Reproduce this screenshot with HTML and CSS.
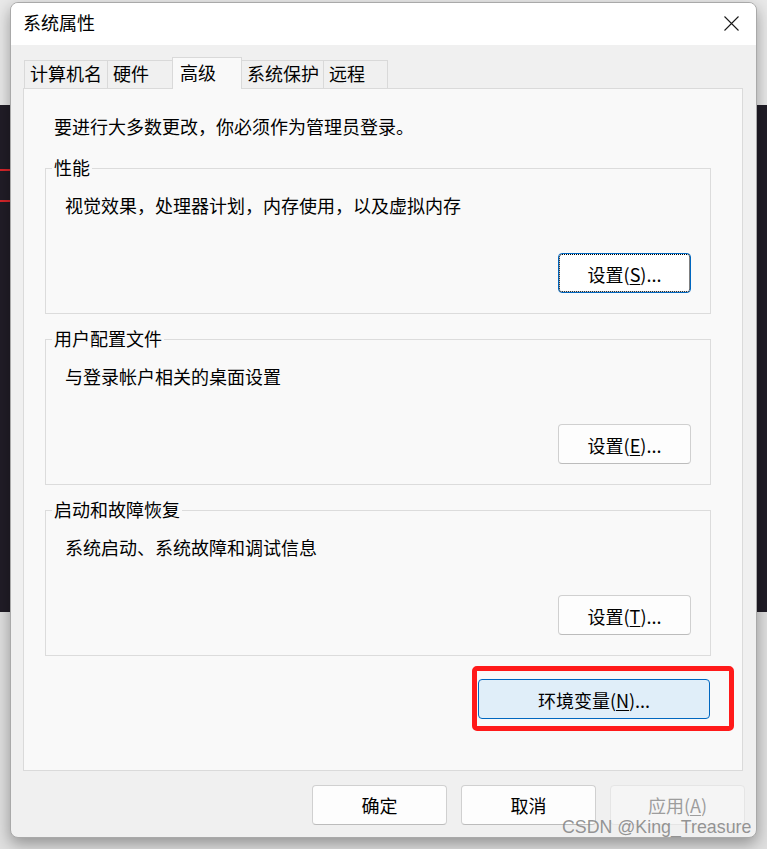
FILE: index.html
```html
<!DOCTYPE html>
<html lang="zh-CN">
<head>
    <meta charset="UTF-8">
    <meta name="viewport" content="width=device-width, initial-scale=1.0">
    <title>系统属性</title>
    <link rel="stylesheet" href="styles.css">
</head>
<body>
    <div class="dialog">
        <div class="titlebar">
            <span class="title">系统属性</span>
            <button class="close" aria-label="关闭">
                <svg width="15" height="15" viewBox="0 0 15 15">
                    <path d="M0.5 0.5 L14.5 14.5 M14.5 0.5 L0.5 14.5" stroke="#1a1a1a" stroke-width="1.1" fill="none"/>
                </svg>
            </button>
        </div>

        <div class="content">
            <div class="tabs">
                <div class="tab tab-name">计算机名</div>
                <div class="tab tab-hw">硬件</div>
                <div class="tab tab-adv active">高级</div>
                <div class="tab tab-prot">系统保护</div>
                <div class="tab tab-remote">远程</div>
            </div>

            <div class="panel">
                <p class="notice">要进行大多数更改，你必须作为管理员登录。</p>

                <div class="group first">
                    <div class="group-title">性能</div>
                    <p class="group-desc">视觉效果，处理器计划，内存使用，以及虚拟内存</p>
                    <div class="group-actions">
                        <button class="btn focused">设置(<u>S</u>)...</button>
                    </div>
                </div>

                <div class="group">
                    <div class="group-title">用户配置文件</div>
                    <p class="group-desc">与登录帐户相关的桌面设置</p>
                    <div class="group-actions">
                        <button class="btn">设置(<u>E</u>)...</button>
                    </div>
                </div>

                <div class="group">
                    <div class="group-title">启动和故障恢复</div>
                    <p class="group-desc">系统启动、系统故障和调试信息</p>
                    <div class="group-actions">
                        <button class="btn">设置(<u>T</u>)...</button>
                    </div>
                </div>

                <div class="env-row">
                    <div class="env-wrap">
                        <button class="btn env">环境变量(<u>N</u>)...</button>
                        <span class="mark"></span>
                    </div>
                </div>
            </div>

            <div class="footer">
                <button class="btn footer-btn">确定</button>
                <button class="btn footer-btn">取消</button>
                <button class="btn footer-btn" disabled>应用(<u>A</u>)</button>
            </div>
        </div>
    </div>

    <div class="watermark">CSDN @King_Treasure</div>
</body>
</html>
```

FILE: styles.css
```css
body {
    margin: 0;
    height: 849px;
    overflow: hidden;
    position: relative;
    font-family: "Noto Sans CJK SC", "Microsoft YaHei", sans-serif;
    font-size: 18px;
    color: #000;
    background:
        linear-gradient(to bottom, transparent 169px, #d8262b 169px, #d8262b 171px, transparent 171px, transparent 200px, #d8262b 200px, #d8262b 202px, transparent 202px) 0 0 / 10px 100% no-repeat,
        linear-gradient(to bottom, #e9e9e9 0, #e9e9e9 105px, #211d27 105px, #211d27 612px, #e0e0e0 612px);
}

.dialog {
    box-sizing: border-box;
    width: 747px;
    height: 836px;
    margin: 2px 0 0 10px;
    background-color: #f0f0f0;
    border: 1px solid #a9a9a9;
    border-radius: 8px;
    box-shadow: 0 6px 16px rgba(0,0,0,0.35);
    overflow: hidden;
}

.titlebar {
    box-sizing: border-box;
    height: 42px;
    padding: 0 17px 5px 12px;
    display: flex;
    align-items: center;
    background-color: #fff;
}

.title {
    line-height: 22px;
}

.close {
    margin: 3px 0 0 auto;
    padding: 0;
    width: 15px;
    height: 15px;
    border: none;
    background: none;
}

.close svg {
    display: block;
}

.content {
    padding: 12px 13px 0 12px;
}

/* tabs */
.tabs {
    display: flex;
    align-items: flex-end;
    height: 31px;
    padding-left: 1px;
    position: relative;
    z-index: 1;
}

.tab {
    box-sizing: border-box;
    height: 28px;
    margin-left: -1px;
    padding-left: 5px;
    line-height: 24px;
    background-color: #f0f0f0;
    border: 1px solid #d9d9d9;
    border-bottom: none;
}

.tab:first-child {
    margin-left: 0;
}

.tab.active {
    height: 32px;
    margin-bottom: -1px;
    padding-left: 7px;
    line-height: 28px;
    background-color: #f9f9f9;
}

.tab-name { width: 84px; }
.tab-hw { width: 66px; }
.tab-adv { width: 70px; }
.tab-prot { width: 83px; }
.tab-remote { width: 65px; }

/* panel */
.panel {
    box-sizing: border-box;
    height: 683px;
    padding: 26px 31px 0 21px;
    background-color: #f9f9f9;
    border: 1px solid #dadada;
}

.notice {
    margin: 0 0 0 9px;
    line-height: 22px;
}

.group {
    margin-top: 25px;
    padding-bottom: 20px;
    border: 1px solid #dcdcdc;
}

.group.first {
    margin-top: 31px;
}

.group-title {
    width: fit-content;
    margin: -13px 0 0 6px;
    padding: 0 2px;
    line-height: 22px;
    background-color: #f9f9f9;
}

.group-desc {
    margin: 16px 0 0 19px;
    line-height: 22px;
}

.group-actions {
    display: flex;
    justify-content: flex-end;
    margin-top: 37px;
    padding-right: 19px;
}

/* buttons */
.btn {
    box-sizing: border-box;
    width: 133px;
    height: 40px;
    padding: 1px 0 0;
    font-family: inherit;
    font-size: 18px;
    color: #000;
    background-color: #fdfdfd;
    border: 1px solid #d0d0d0;
    border-bottom-color: #bcbcbc;
    border-radius: 4px;
}

.btn u {
    text-underline-offset: 2px;
}

.btn.focused {
    background-color: #fff;
    border-color: #0067c0;
    outline: 1px dotted #000;
    outline-offset: -2px;
}

.env-row {
    display: flex;
    justify-content: flex-end;
    margin-top: 23px;
    padding-right: 1px;
}

.env-wrap {
    position: relative;
}

.btn.env {
    width: 232px;
    background-color: #e0eef9;
    border-color: #0067c0;
}

.mark {
    position: absolute;
    left: -6px;
    top: -13px;
    box-sizing: border-box;
    width: 262px;
    height: 65px;
    border: 5px solid #ff1a1a;
    border-radius: 5px;
}

.footer {
    display: flex;
    justify-content: flex-end;
    gap: 14px;
    margin: 14px -2px 0 0;
}

.footer-btn {
    width: 135px;
    padding-top: 0;
}

.footer-btn:disabled {
    color: #9d9d9d;
    background-color: #f5f5f5;
    border-color: #e5e5e5;
}

.watermark {
    position: absolute;
    left: 562px;
    top: 817px;
    font-family: "Liberation Sans", Arial, sans-serif;
    font-size: 17.8px;
    line-height: 20px;
    color: rgba(130,130,130,0.85);
}
```
